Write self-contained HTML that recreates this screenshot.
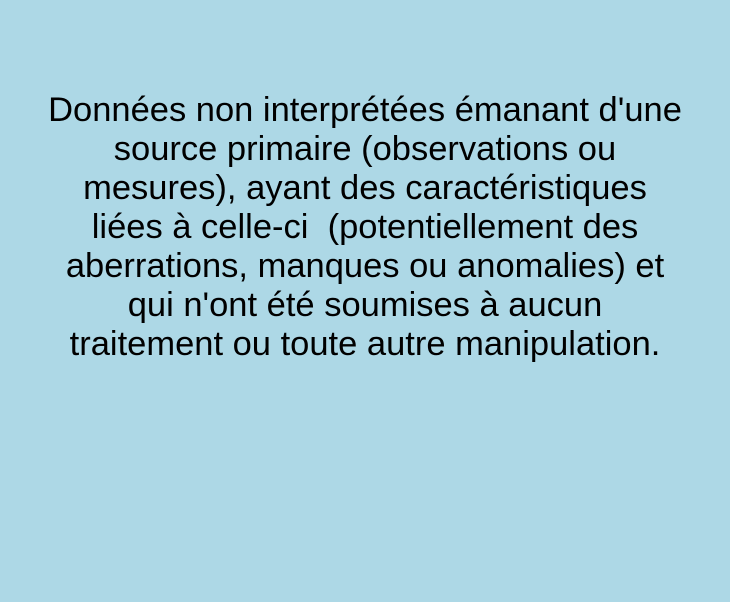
<!DOCTYPE html>
<html><head><meta charset="utf-8"><style>
html,body{margin:0;padding:0;}
body{width:730px;height:602px;background:#add8e6;overflow:hidden;}
.t{position:absolute;top:91px;left:0;width:730px;text-align:center;font-family:"Liberation Sans",sans-serif;font-size:34.5px;line-height:39px;color:#000;white-space:pre;}
</style></head><body>
<div class="t">Données non interprétées émanant d'une
source primaire (observations ou
mesures), ayant des caractéristiques
liées à celle-ci  (potentiellement des
aberrations, manques ou anomalies) et
qui n'ont été soumises à aucun
traitement ou toute autre manipulation.</div>
</body></html>
